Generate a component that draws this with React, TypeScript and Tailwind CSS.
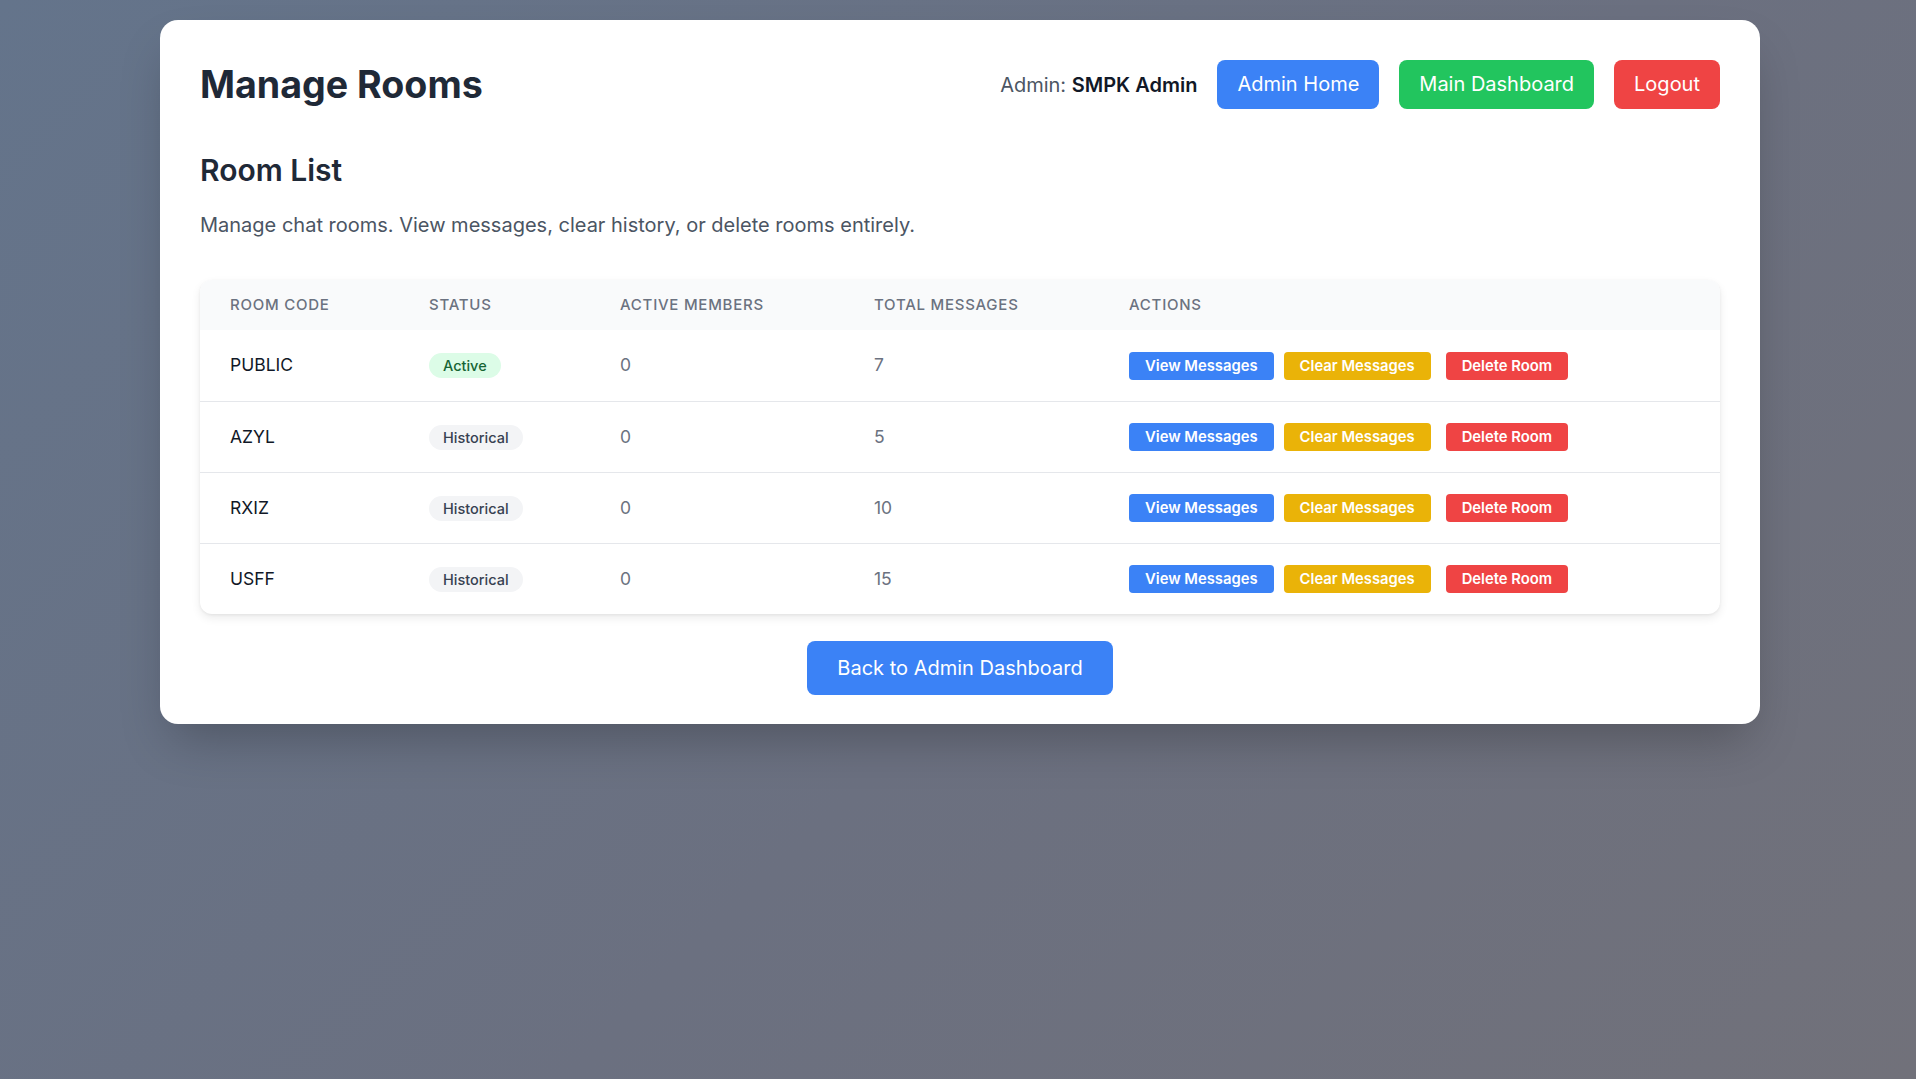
import React from "react";

type Room = {
  code: string;
  active: boolean;
  members: number;
  messages: number;
};

const rooms: Room[] = [
  { code: "PUBLIC", active: true, members: 0, messages: 7 },
  { code: "AZYL", active: false, members: 0, messages: 5 },
  { code: "RXIZ", active: false, members: 0, messages: 10 },
  { code: "USFF", active: false, members: 0, messages: 15 },
];

const cols = "grid grid-cols-[199px_191px_254px_255px_1fr]";

function StatusBadge({ active }: { active: boolean }) {
  if (active) {
    return (
      <span className="inline-block rounded-full bg-[#dcfce7] px-[14px] py-[3px] text-[14.5px] leading-[19px] font-medium text-[#166534]">
        Active
      </span>
    );
  }
  return (
    <span className="inline-block rounded-full bg-[#f3f4f6] px-[14px] py-[3px] text-[14.5px] leading-[19px] font-medium text-[#374151]">
      Historical
    </span>
  );
}

export default function App() {
  return (
    <div className="min-h-screen bg-[linear-gradient(135deg,#64748b_0%,#6b7080_55%,#71717a_100%)] pt-5 pb-10 pl-[4px] font-['Inter',sans-serif]">
      <div className="mx-auto w-[1600px] rounded-[18px] bg-white px-10 pt-10 pb-[29px] shadow-2xl">
        {/* Header */}
        <header className="flex items-center justify-between">
          <h1 className="text-[37.6px] leading-[49px] font-bold text-[#1f2937]">
            Manage Rooms
          </h1>
          <div className="flex items-center gap-5">
            <span className="text-[20px] text-[#4b5563]">
              Admin: <span className="font-semibold text-[#111827]">SMPK Admin</span>
            </span>
            <button className="rounded-lg bg-[#3b82f6] px-5 py-3 text-[20px] leading-[25px] text-white">
              Admin Home
            </button>
            <button className="rounded-lg bg-[#22c55e] px-5 py-3 text-[20px] leading-[25px] text-white">
              Main Dashboard
            </button>
            <button className="rounded-lg bg-[#ef4444] px-5 py-3 text-[20px] leading-[25px] text-white">
              Logout
            </button>
          </div>
        </header>

        <h2 className="mt-[43px] text-[30px] leading-[36px] font-semibold text-[#1f2937]">
          Room List
        </h2>
        <p className="mt-[23px] text-[20px] leading-[28px] text-[#4b5563]">
          Manage chat rooms. View messages, clear history, or delete rooms entirely.
        </p>

        {/* Table */}
        <div className="mt-[41px] overflow-hidden rounded-xl bg-white shadow-[0_4px_10px_rgba(0,0,0,0.08),0_1px_3px_rgba(0,0,0,0.06)]">
          <div className={`${cols} h-[50px] items-center bg-[#f9fafb] text-[15px] font-medium tracking-wider text-[#6b7280] uppercase`}>
            <div className="px-[30px]">Room Code</div>
            <div className="px-[30px]">Status</div>
            <div className="px-[30px]">Active Members</div>
            <div className="px-[30px]">Total Messages</div>
            <div className="px-[30px]">Actions</div>
          </div>
          {rooms.map((room, i) => (
            <div
              key={room.code}
              className={`${cols} items-center ${i === 0 ? "h-[71px]" : "h-[71px] border-t border-[#e5e7eb]"} text-[17.5px]`}
            >
              <div className="px-[30px] text-[#111827]">{room.code}</div>
              <div className="px-[30px]">
                <StatusBadge active={room.active} />
              </div>
              <div className="px-[30px] text-[#6b7280]">{room.members}</div>
              <div className="px-[30px] text-[#6b7280]">{room.messages}</div>
              <div className="flex items-center px-[30px]">
                <button className="rounded bg-[#3b82f6] px-4 py-1 text-[14.8px] leading-5 font-semibold text-white">
                  View Messages
                </button>
                <button className="ml-[10px] rounded bg-[#eab308] px-4 py-1 text-[14.8px] leading-5 font-semibold text-white">
                  Clear Messages
                </button>
                <button className="ml-[15px] rounded bg-[#ef4444] px-4 py-1 text-[14.8px] leading-5 font-semibold text-white">
                  Delete Room
                </button>
              </div>
            </div>
          ))}
        </div>

        <div className="mt-[27px] flex justify-center">
          <button className="rounded-lg bg-[#3b82f6] px-[30px] py-[13px] text-[20px] leading-7 text-white">
            Back to Admin Dashboard
          </button>
        </div>
      </div>
    </div>
  );
}
